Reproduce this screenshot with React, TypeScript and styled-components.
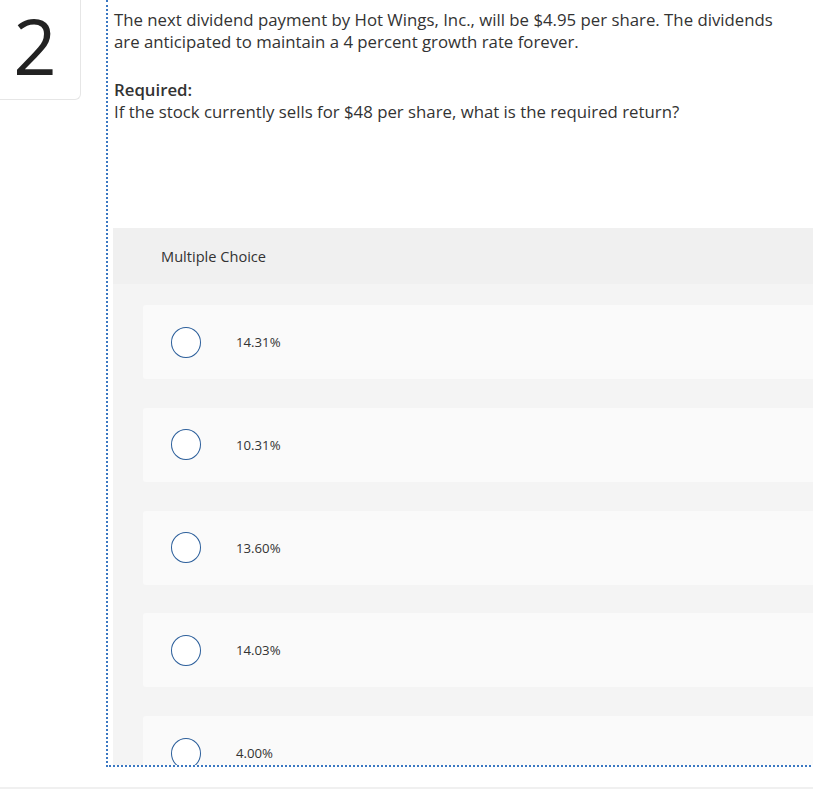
import React from 'react';
import styled, {createGlobalStyle} from "styled-components";

const GlobalStyle = createGlobalStyle`
  html, body {
    margin: 0;
    padding: 0;
    background: #fff;
    overflow: hidden;
  }
  body {
    font-family: "Open Sans", "Liberation Sans", sans-serif;
    color: #333;
  }
`

const options = ["14.31%", "10.31%", "13.60%", "14.03%", "4.00%"];

export default function App() {
    return (
        <>
            <GlobalStyle/>
            <Page>
                <QuestionRow>
                    <NumberCard>2</NumberCard>
                    <QuestionBody>
                        <Prompt>
                            The next dividend payment by Hot Wings, Inc., will be $4.95 per share. The dividends
                            <br/>
                            are anticipated to maintain a 4 percent growth rate forever.
                        </Prompt>
                        <Required>
                            <strong>Required:</strong>
                            <br/>
                            If the stock currently sells for $48 per share, what is the required return?
                        </Required>
                        <ChoicePanel>
                            <ChoiceHeader>Multiple Choice</ChoiceHeader>
                            <ChoiceList>
                                {options.map(o => (
                                    <Choice key={o}>
                                        <Radio/>
                                        <ChoiceLabel>{o}</ChoiceLabel>
                                    </Choice>
                                ))}
                            </ChoiceList>
                        </ChoicePanel>
                    </QuestionBody>
                </QuestionRow>
                <Divider/>
            </Page>
        </>
    );
}

const Page = styled.div`
  width: 813px;
  height: 792px;
  overflow: hidden;
  display: flex;
  flex-direction: column;
`
const QuestionRow = styled.div`
  display: flex;
  align-items: flex-start;
  gap: 25px;
  height: 767px;
`
const NumberCard = styled.div`
  flex: none;
  width: 81px;
  height: 100px;
  border-right: 1px solid #e6e6e6;
  border-bottom: 1px solid #e6e6e6;
  border-bottom-right-radius: 6px;
  display: flex;
  align-items: center;
  justify-content: center;
  font-family: "Open Sans", sans-serif;
  font-size: 76px;
  font-weight: 400;
  color: #222;
  line-height: 1.3;
  padding-bottom: 6px;
  box-sizing: border-box;
  padding-right: 10px;
`
const QuestionBody = styled.div`
  flex: 1;
  min-width: 760px;
  height: 767px;
  box-sizing: border-box;
  border-left: 2px dotted #3b78c2;
  border-bottom: 2px dotted #3b78c2;
  padding: 9px 0 0 6px;
  overflow: hidden;
  font-size: 16.8px;
  line-height: 22px;
  white-space: nowrap;
`
const Prompt = styled.p`
  margin: 0 0 26px;
`
const Required = styled.p`
  margin: 0;
  strong {
    font-weight: 600;
  }
`
const ChoicePanel = styled.div`
  margin-top: 105px;
  margin-left: -1px;
`
const ChoiceHeader = styled.div`
  height: 56px;
  background: #f0f0f0;
  display: flex;
  align-items: center;
  padding-left: 48px;
  font-size: 14.6px;
  color: #333;
`
const ChoiceList = styled.div`
  background: #f4f4f4;
  padding: 21px 0 30px 30px;
  display: flex;
  flex-direction: column;
  gap: 28.8px;
`
const Choice = styled.div`
  height: 74px;
  background: #fafafa;
  border-radius: 3px 0 0 3px;
  display: flex;
  align-items: center;
  padding-left: 28px;
`
const Radio = styled.span`
  flex: none;
  width: 28px;
  height: 29px;
  border: 1.5px solid #2c5f9b;
  border-radius: 50%;
  background: #fff;
`
const ChoiceLabel = styled.span`
  margin-left: 35px;
  font-size: 13.2px;
  color: #333;
`
const Divider = styled.div`
  margin-top: 20px;
  height: 2px;
  background: #f0f0f0;
`
